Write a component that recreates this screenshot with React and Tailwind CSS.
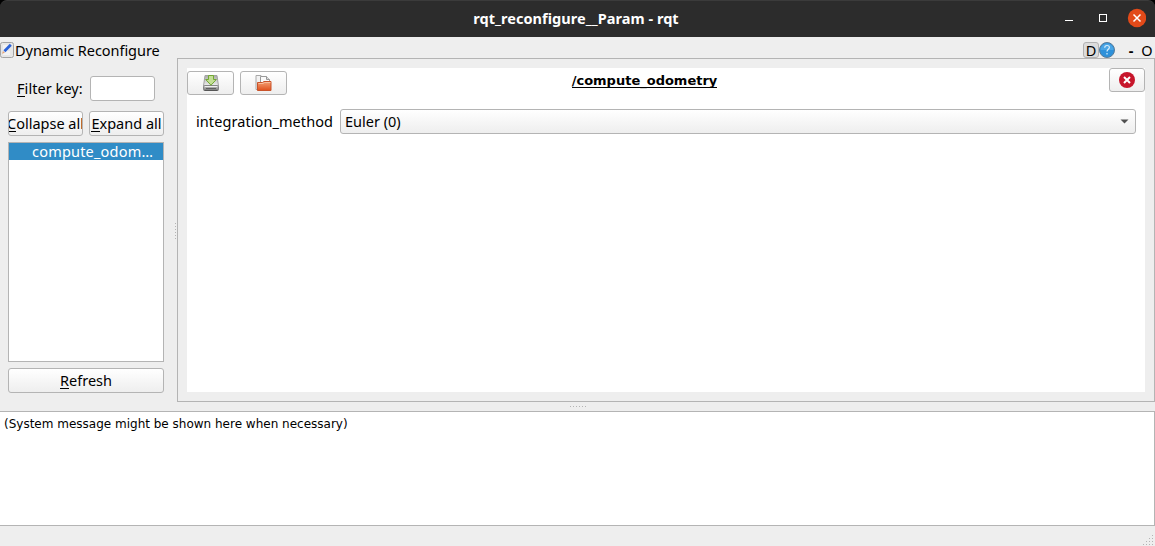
import React from "react";

const button =
  "flex shrink-0 items-center overflow-hidden whitespace-nowrap rounded-[3px] border border-[#b4b4b4] bg-linear-to-b from-white to-[#eeeeee]";

function Mnemonic({ text }) {
  return (
    <span className="block pb-[2px]">
      <span className="border-b border-black inline-block h-[18px] leading-[18px]">{text[0]}</span>
      {text.slice(1)}
    </span>
  );
}

function EditIcon() {
  return (
    <svg width="14" height="16" viewBox="0 0 14 16" className="shrink-0">
      <rect x=".5" y=".5" width="13" height="15" rx="2" fill="#e6e6e6" stroke="#a3a3a3" />
      <path d="M3 4h7M3 6h6M3 8h5M3 10h7M3 12h7" stroke="#fff" />
      <path d="M4.4 9.2 10.8 2.8" stroke="#2a62d8" strokeWidth="2.800" />
      <path d="m2 11.800 1-2.800 2 1.800z" fill="#e2a57c" />
    </svg>
  );
}

function SaveIcon() {
  return (
    <svg width="16" height="16" viewBox="0 0 16 16">
      <defs>
        <linearGradient id="drive" x1="0" y1="0" x2="0" y2="1">
          <stop offset="0" stopColor="#d0d0d0" />
          <stop offset="1" stopColor="#747474" />
        </linearGradient>
        <linearGradient id="tray" x1="0" y1="0" x2="0" y2="1">
          <stop offset="0" stopColor="#aaaaaa" />
          <stop offset="1" stopColor="#f0f0f0" />
        </linearGradient>
      </defs>
      <path d="M2 .5h12l1.500 10.500H.5z" fill="url(#tray)" stroke="#a2a2a2" />
      <rect x=".5" y="10.500" width="15" height="5" rx="1" fill="url(#drive)" stroke="#858585" />
      <path d="M2 11.500h12" stroke="#eeeeee" />
      <path d="M3 13.500h10" stroke="#606060" />
      <path d="M1.500 15.500h13" stroke="#555" />
      <path d="M5.500.5h5v4h2.800L8 10.200 2.700 4.500h2.800z" fill="#c4df96" stroke="#72a833" />
    </svg>
  );
}

function FolderIcon() {
  return (
    <svg width="17" height="16" viewBox="0 0 17 16">
      <defs>
        <linearGradient id="folder" x1="0" y1="0" x2="0" y2="1">
          <stop offset="0" stopColor="#f4a276" />
          <stop offset="1" stopColor="#e0501c" />
        </linearGradient>
      </defs>
      <path d="M1 .5h5l3 3v11H1z" fill="#f2f2f2" stroke="#a8a8a8" />
      <path d="M5.500 1.500h6l3 3v6h-9z" fill="#fafafa" stroke="#999" />
      <path d="M11.500 1.500v3h3" fill="#ddd" stroke="#999" />
      <path d="M2.500 15.500V7.500h5l1.500-1h7v9z" fill="url(#folder)" stroke="#c9532a" />
      <path d="M3.500 8.500h4.500l1.500-1h6" fill="none" stroke="#f9bd9b" />
    </svg>
  );
}

function TitleBar() {
  return (
    <div className="bg-black">
      <header className="flex h-[37px] items-center rounded-t-[7px] border-t border-[#3b3b3b] bg-[#2c2c2c] pr-[9px] text-white">
        <div className="w-[113px]" />
        <div className="flex-1 pr-[25px] pb-[2px] text-center text-[14.5px] leading-5 font-bold tracking-[0.04px]">
          rqt_reconfigure__Param - rqt
        </div>
        <svg width="82" height="36" viewBox="0 0 82 36">
          <path d="M1 19.500h8" stroke="#fff" />
          <rect x="35.500" y="13.500" width="7" height="7" fill="none" stroke="#fff" />
          <circle cx="73" cy="17" r="9.200" fill="#e24a19" />
          <path d="m69.500 13.500 7 7m0-7-7 7" stroke="#fff" strokeWidth="1.500" />
        </svg>
      </header>
    </div>
  );
}

function DockHeader() {
  return (
    <div className="flex h-[21px] items-center">
      <div className="flex h-full items-center gap-px pt-[5px]">
        <EditIcon />
        <span className="leading-[18px] tracking-[-0.04px]">Dynamic Reconfigure</span>
      </div>
      <div className="ml-auto flex items-center pt-[5px] pr-[2px] leading-4">
        <span className="flex h-4 w-4 items-center justify-center rounded-[3px] border border-[#b2b2b2] bg-[#dcdcdc]">D</span>
        <svg width="16" height="16" viewBox="0 0 16 16">
          <circle cx="8" cy="8" r="7.500" fill="#2e91da" stroke="#587b98" />
          <path d="M1.500 8a6.500 6.500 0 0 1 13 0z" fill="#4aa5e5" />
          <path d="M5.700 5.800C5.700 4.200 6.700 3.500 8 3.500c1.400 0 2.400.8 2.400 2C10.400 7.200 8 7.500 8 9.500M8 11v1.500" fill="none" stroke="#d8eefc" strokeWidth="1.200" />
        </svg>
        <span className="ml-[13px] w-[6px] text-center font-bold">-</span>
        <span className="ml-[7px] w-[12px] text-center">O</span>
      </div>
    </div>
  );
}

function Sidebar() {
  return (
    <aside className="flex w-[173px] shrink-0 flex-col pt-[18px] pr-[9px] pl-2">
      <div className="flex h-[25px] items-center pl-[9px]">
        <span className="w-[73px] whitespace-nowrap tracking-[0.06px]">
          <Mnemonic text="Filter key:" />
        </span>
        <input aria-label="Filter key" className="h-[25px] w-[65px] rounded-[3px] border border-[#b4b4b4] bg-white" />
      </div>
      <div className="mt-[10px] flex gap-[6px]">
        <button className={`${button} h-[25px] w-[75px] justify-center`}><Mnemonic text="Collapse all" /></button>
        <button className={`${button} h-[25px] w-[75px] justify-center`}><Mnemonic text="Expand all" /></button>
      </div>
      <div className="mt-[6px] h-[220px] border border-[#b4b4b4] bg-white">
        <div className="h-[17px] bg-[#308cc6] pl-[23px] leading-[17px] tracking-[0.2px] whitespace-nowrap text-white">compute_odom…</div>
      </div>
      <button className={`${button} mt-[6px] h-[25px] justify-center`}><Mnemonic text="Refresh" /></button>
    </aside>
  );
}

function ParameterPanel() {
  return (
    <section className="flex flex-1 border border-[#b4b4b4] p-[9px]">
      <div className="flex flex-1 flex-col bg-white">
        <div className="flex h-[41px] items-start">
          <div className="flex w-[100px] gap-[6px] pt-[3px]">
            <button className={`${button} h-6 w-[47px] justify-center`}><SaveIcon /></button>
            <button className={`${button} h-6 w-[47px] justify-center`}><FolderIcon /></button>
          </div>
          <h1 className="flex-1 pt-[4px] pr-[107px] text-center font-['DejaVu_Sans',sans-serif] text-[13px] leading-[18px] font-bold">
            <span className="inline-block h-[16px] border-b border-black leading-[17px]">/compute_odometry</span>
          </h1>
          <button className={`${button} h-6 w-[36px] justify-center`}>
            <svg width="16" height="16" viewBox="0 0 16 16">
              <circle cx="8" cy="8" r="8" fill="#c7162b" />
              <path d="m5 5 6 6m0-6-6 6" stroke="#fff" strokeWidth="2" />
            </svg>
          </button>
        </div>
        <div className="flex h-[25px] items-center pr-[9px] pl-[9px]">
          <label className="w-[144px] pb-[2px] tracking-[0.08px]">integration_method</label>
          <button className={`${button} h-[25px] flex-1 justify-between pr-[6px] pl-1`}>
            <span className="pb-[2px]">Euler (0)</span>
            <svg width="9" height="5" viewBox="0 0 9 5"><path d="M.5.5h8l-4 4z" fill="#505050" /></svg>
          </button>
        </div>
      </div>
    </section>
  );
}

export default function App() {
  return (
    <div className="flex h-[546px] w-[1155px] flex-col overflow-hidden bg-[#eeeeee] font-['Noto_Sans',sans-serif] text-[14.5px] leading-5 text-black">
      <TitleBar />
      <DockHeader />
      <main className="flex h-[344px] shrink-0">
        <Sidebar />
        <div className="flex w-1 flex-col gap-[2px] pt-[165px] pl-[2px]">
          {[0, 1, 2, 3, 4, 5].map((i) => <i key={i} className="h-px w-px bg-[#b4b4b4]" />)}
        </div>
        <ParameterPanel />
      </main>
      <div className="flex h-[9px] shrink-0 items-center justify-center gap-[2px]">
        {[0, 1, 2, 3, 4, 5].map((i) => <i key={i} className="h-px w-px bg-[#b4b4b4]" />)}
      </div>
      <div className="h-[115px] shrink-0 border-y border-r border-[#b4b4b4] bg-white pt-1 pl-1 font-['DejaVu_Sans',sans-serif] text-[12px] leading-4">
        (System message might be shown here when necessary)
      </div>
      <footer className="flex h-5 items-end justify-end pr-px">
        <svg width="12" height="12" viewBox="0 0 12 12" fill="#b4b4b4">
          <path d="M10 1h1v1h-1zM7 4h1v1H7zM10 4h1v1h-1zM4 7h1v1H4zM7 7h1v1H7zM10 7h1v1h-1zM1 10h1v1H1zM4 10h1v1H4zM7 10h1v1H7zM10 10h1v1h-1z" />
        </svg>
      </footer>
    </div>
  );
}
